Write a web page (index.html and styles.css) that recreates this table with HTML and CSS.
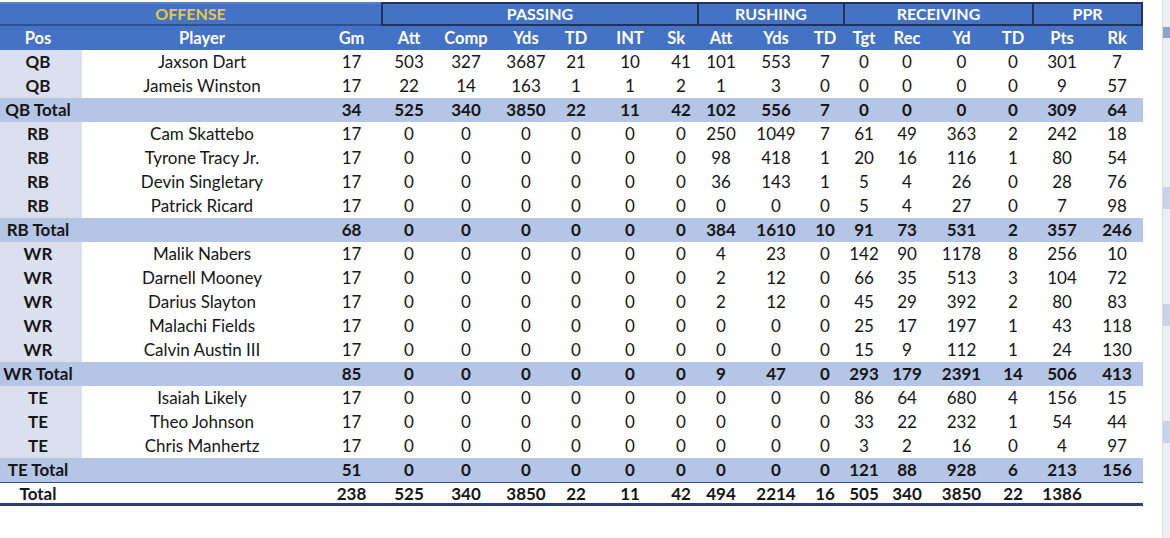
FILE: index.html
```html
<!DOCTYPE html>
<html>
<head>
<meta charset="utf-8">
<link rel="stylesheet" href="styles.css">
</head>
<body>
<div class="page">
  <table class="stats">
    <colgroup>
      <col style="width:82px"><col style="width:240px"><col style="width:59px">
      <col style="width:56px"><col style="width:58px"><col style="width:62px"><col style="width:38px"><col style="width:70px"><col style="width:32px">
      <col style="width:48px"><col style="width:62px"><col style="width:36px">
      <col style="width:42px"><col style="width:44px"><col style="width:65px"><col style="width:38px">
      <col style="width:60px"><col style="width:51px">
    </colgroup>
    <thead>
      <tr class="groups">
        <th colspan="3" class="offense">OFFENSE</th>
        <th colspan="6" class="grp">PASSING</th>
        <th colspan="3" class="grp">RUSHING</th>
        <th colspan="4" class="grp">RECEIVING</th>
        <th colspan="2" class="grp last">PPR</th>
      </tr>
      <tr class="cols">
        <th class="pos">Pos</th><th>Player</th><th>Gm</th>
        <th>Att</th><th>Comp</th><th>Yds</th><th>TD</th><th>INT</th><th class="sk-h">Sk</th>
        <th>Att</th><th>Yds</th><th>TD</th>
        <th>Tgt</th><th>Rec</th><th>Yd</th><th>TD</th>
        <th>Pts</th><th class="rk">Rk</th>
      </tr>
    </thead>
    <tbody>
      <tr><td class="pos">QB</td><td>Jaxson Dart</td><td>17</td><td>503</td><td>327</td><td>3687</td><td>21</td><td>10</td><td>41</td><td>101</td><td>553</td><td>7</td><td>0</td><td>0</td><td>0</td><td>0</td><td>301</td><td class="rk">7</td></tr>
      <tr><td class="pos">QB</td><td>Jameis Winston</td><td>17</td><td>22</td><td>14</td><td>163</td><td>1</td><td>1</td><td>2</td><td>1</td><td>3</td><td>0</td><td>0</td><td>0</td><td>0</td><td>0</td><td>9</td><td class="rk">57</td></tr>
      <tr class="sub"><td class="pos">QB Total</td><td></td><td>34</td><td>525</td><td>340</td><td>3850</td><td>22</td><td>11</td><td>42</td><td>102</td><td>556</td><td>7</td><td>0</td><td>0</td><td>0</td><td>0</td><td>309</td><td class="rk">64</td></tr>
      <tr><td class="pos">RB</td><td>Cam Skattebo</td><td>17</td><td>0</td><td>0</td><td>0</td><td>0</td><td>0</td><td>0</td><td>250</td><td>1049</td><td>7</td><td>61</td><td>49</td><td>363</td><td>2</td><td>242</td><td class="rk">18</td></tr>
      <tr><td class="pos">RB</td><td>Tyrone Tracy Jr.</td><td>17</td><td>0</td><td>0</td><td>0</td><td>0</td><td>0</td><td>0</td><td>98</td><td>418</td><td>1</td><td>20</td><td>16</td><td>116</td><td>1</td><td>80</td><td class="rk">54</td></tr>
      <tr><td class="pos">RB</td><td>Devin Singletary</td><td>17</td><td>0</td><td>0</td><td>0</td><td>0</td><td>0</td><td>0</td><td>36</td><td>143</td><td>1</td><td>5</td><td>4</td><td>26</td><td>0</td><td>28</td><td class="rk">76</td></tr>
      <tr><td class="pos">RB</td><td>Patrick Ricard</td><td>17</td><td>0</td><td>0</td><td>0</td><td>0</td><td>0</td><td>0</td><td>0</td><td>0</td><td>0</td><td>5</td><td>4</td><td>27</td><td>0</td><td>7</td><td class="rk">98</td></tr>
      <tr class="sub"><td class="pos">RB Total</td><td></td><td>68</td><td>0</td><td>0</td><td>0</td><td>0</td><td>0</td><td>0</td><td>384</td><td>1610</td><td>10</td><td>91</td><td>73</td><td>531</td><td>2</td><td>357</td><td class="rk">246</td></tr>
      <tr><td class="pos">WR</td><td>Malik Nabers</td><td>17</td><td>0</td><td>0</td><td>0</td><td>0</td><td>0</td><td>0</td><td>4</td><td>23</td><td>0</td><td>142</td><td>90</td><td>1178</td><td>8</td><td>256</td><td class="rk">10</td></tr>
      <tr><td class="pos">WR</td><td>Darnell Mooney</td><td>17</td><td>0</td><td>0</td><td>0</td><td>0</td><td>0</td><td>0</td><td>2</td><td>12</td><td>0</td><td>66</td><td>35</td><td>513</td><td>3</td><td>104</td><td class="rk">72</td></tr>
      <tr><td class="pos">WR</td><td>Darius Slayton</td><td>17</td><td>0</td><td>0</td><td>0</td><td>0</td><td>0</td><td>0</td><td>2</td><td>12</td><td>0</td><td>45</td><td>29</td><td>392</td><td>2</td><td>80</td><td class="rk">83</td></tr>
      <tr><td class="pos">WR</td><td>Malachi Fields</td><td>17</td><td>0</td><td>0</td><td>0</td><td>0</td><td>0</td><td>0</td><td>0</td><td>0</td><td>0</td><td>25</td><td>17</td><td>197</td><td>1</td><td>43</td><td class="rk">118</td></tr>
      <tr><td class="pos">WR</td><td>Calvin Austin III</td><td>17</td><td>0</td><td>0</td><td>0</td><td>0</td><td>0</td><td>0</td><td>0</td><td>0</td><td>0</td><td>15</td><td>9</td><td>112</td><td>1</td><td>24</td><td class="rk">130</td></tr>
      <tr class="sub"><td class="pos">WR Total</td><td></td><td>85</td><td>0</td><td>0</td><td>0</td><td>0</td><td>0</td><td>0</td><td>9</td><td>47</td><td>0</td><td>293</td><td>179</td><td>2391</td><td>14</td><td>506</td><td class="rk">413</td></tr>
      <tr><td class="pos">TE</td><td>Isaiah Likely</td><td>17</td><td>0</td><td>0</td><td>0</td><td>0</td><td>0</td><td>0</td><td>0</td><td>0</td><td>0</td><td>86</td><td>64</td><td>680</td><td>4</td><td>156</td><td class="rk">15</td></tr>
      <tr><td class="pos">TE</td><td>Theo Johnson</td><td>17</td><td>0</td><td>0</td><td>0</td><td>0</td><td>0</td><td>0</td><td>0</td><td>0</td><td>0</td><td>33</td><td>22</td><td>232</td><td>1</td><td>54</td><td class="rk">44</td></tr>
      <tr><td class="pos">TE</td><td>Chris Manhertz</td><td>17</td><td>0</td><td>0</td><td>0</td><td>0</td><td>0</td><td>0</td><td>0</td><td>0</td><td>0</td><td>3</td><td>2</td><td>16</td><td>0</td><td>4</td><td class="rk">97</td></tr>
      <tr class="sub"><td class="pos">TE Total</td><td></td><td>51</td><td>0</td><td>0</td><td>0</td><td>0</td><td>0</td><td>0</td><td>0</td><td>0</td><td>0</td><td>121</td><td>88</td><td>928</td><td>6</td><td>213</td><td class="rk">156</td></tr>
      <tr class="grand"><td class="pos">Total</td><td></td><td>238</td><td>525</td><td>340</td><td>3850</td><td>22</td><td>11</td><td>42</td><td>494</td><td>2214</td><td>16</td><td>505</td><td>340</td><td>3850</td><td>22</td><td>1386</td><td class="rk"></td></tr>
    </tbody>
  </table>
  <div class="edge">
    <div class="edge-bar"></div>
    <div class="edge-patch p1"></div>
    <div class="edge-patch p2"></div>
    <div class="edge-patch p3"></div>
  </div>
</div>
</body>
</html>
```
FILE: styles.css
```css
html, body {
  margin: 0;
  padding: 0;
  background: #ffffff;
}

.page {
  display: flex;
  width: 1170px;
  height: 538px;
  overflow: hidden;
}

.stats {
  table-layout: fixed;
  width: 1143px;
  border-collapse: separate;
  border-spacing: 0;
  margin-top: 2px;
  font-family: "Lato", "Open Sans", sans-serif;
  font-size: 17px;
  color: #161616;
  align-self: flex-start;
}

.stats th,
.stats td {
  padding: 0;
  height: 24px;
  line-height: 24px;
  text-align: center;
  white-space: nowrap;
  box-sizing: border-box;
}

/* group header row */
.groups th {
  background: #4472c4;
  color: #ffffff;
  font-weight: 700;
  font-size: 16px;
  height: 24px;
  line-height: 20px;
  border-top: 2px solid #20335c;
  border-bottom: 2px solid #20335c;
}

.groups .offense {
  color: #eac54a;
  border-top-color: #5a7fc8;
  border-bottom-color: #2e4f93;
}

.groups .grp {
  border-left: 2px solid #20335c;
}

.groups .last {
  border-right: 2px solid #20335c;
}

/* column header row */
.cols th {
  background: #4472c4;
  color: #ffffff;
  font-weight: 700;
  font-size: 16.5px;
}

.cols .sk-h {
  padding-right: 12px;
  text-align: right;
}

.stats .pos {
  padding-right: 6px;
  font-weight: 700;
}

.stats .rk {
  padding-right: 1px;
}

tbody .pos {
  background: #dbe0f0;
}

/* subtotal rows */
.sub td {
  background: #b4c5e6;
  font-weight: 700;
}

.sub td.pos {
  background: #b4c5e6;
}

/* grand total row */
.grand td {
  font-weight: 700;
  background: #ffffff;
  box-shadow: inset 0 1px 0 #3b5488, inset 0 -3px 0 #2d4170;
}

.grand td.pos {
  background: #ffffff;
}

/* neighbouring window edge */
.edge {
  margin-left: auto;
  width: 7px;
  height: 538px;
  background: #eceef3;
  border-left: 1px solid #d9dce4;
  display: flex;
  flex-direction: column;
}

.edge-bar {
  margin-top: 27px;
  height: 11px;
  background: #8ea3cf;
}

.edge-patch {
  height: 22px;
  background: #c9d3ea;
}

.p1 { margin-top: 149px; }
.p2 { margin-top: 95px; }
.p3 { margin-top: 95px; }
```
